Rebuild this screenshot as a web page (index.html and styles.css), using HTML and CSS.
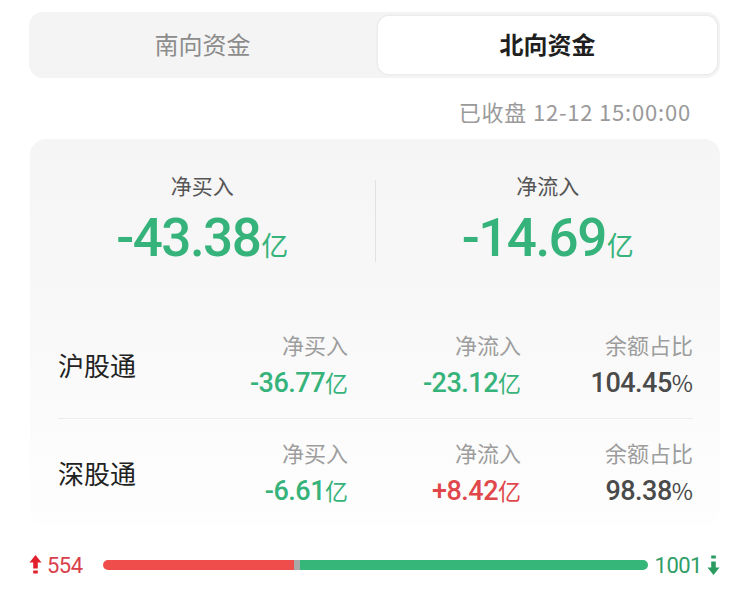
FILE: index.html
```html
<!DOCTYPE html>
<html lang="zh-CN">
<head>
<meta charset="utf-8">
<link rel="stylesheet" href="styles.css">
</head>
<body>
<div class="page">
  <div class="tabs">
    <div class="tab">南向资金</div>
    <div class="tab active">北向资金</div>
  </div>
  <div class="stamp">已收盘 12-12 15:00:00</div>
  <div class="card">
    <div class="summary">
      <div class="sum-col">
        <div class="sum-label">净买入</div>
        <div class="sum-value green"><span class="num">-43.38</span><span class="unit">亿</span></div>
      </div>
      <div class="vdiv"></div>
      <div class="sum-col">
        <div class="sum-label">净流入</div>
        <div class="sum-value green"><span class="num">-14.69</span><span class="unit">亿</span></div>
      </div>
    </div>
    <div class="row">
      <div class="row-name">沪股通</div>
      <div class="cell">
        <div class="cell-label">净买入</div>
        <div class="cell-value green"><span class="num">-36.77</span>亿</div>
      </div>
      <div class="cell">
        <div class="cell-label">净流入</div>
        <div class="cell-value green"><span class="num">-23.12</span>亿</div>
      </div>
      <div class="cell">
        <div class="cell-label">余额占比</div>
        <div class="cell-value dark"><span class="num">104.45</span>%</div>
      </div>
    </div>
    <div class="row">
      <div class="row-name">深股通</div>
      <div class="cell">
        <div class="cell-label">净买入</div>
        <div class="cell-value green"><span class="num">-6.61</span>亿</div>
      </div>
      <div class="cell">
        <div class="cell-label">净流入</div>
        <div class="cell-value red"><span class="num">+8.42</span>亿</div>
      </div>
      <div class="cell">
        <div class="cell-label">余额占比</div>
        <div class="cell-value dark"><span class="num">98.38</span>%</div>
      </div>
    </div>
  </div>
  <div class="ratio">
    <div class="count up">
      <svg class="arrow" width="13" height="22" viewBox="0 0 13 22"><path d="M6.5 1 L12.5 8.5 H8.8 V14.5 H4.2 V8.5 H0.5 Z" fill="#e0202c"/><rect x="4.2" y="16.5" width="4.6" height="3" fill="#e0202c"/></svg>
      <span class="num">554</span>
    </div>
    <div class="bar">
      <div class="bar-red" style="width:35.1%"></div>
      <div class="bar-mid"></div>
      <div class="bar-green"></div>
    </div>
    <div class="count down">
      <span class="num">1001</span>
      <svg class="arrow" width="13" height="22" viewBox="0 0 13 22"><rect x="4.2" y="1.5" width="4.6" height="3" fill="#2a9b5f"/><path d="M6.5 21 L12.5 13.5 H8.8 V7.5 H4.2 V13.5 H0.5 Z" fill="#2a9b5f"/></svg>
    </div>
  </div>
</div>
</body>
</html>
```
FILE: styles.css
```css
* { box-sizing: border-box; }
html, body { margin: 0; padding: 0; background: #fff; }
body {
  font-family: "Noto Sans CJK SC", "Noto Sans", sans-serif;
  width: 750px;
  height: 614px;
  overflow: hidden;
}
.page { padding: 12px 30px 0 29px; }

.tabs {
  display: grid;
  grid-template-columns: 1fr 1fr;
  gap: 6px;
  height: 66px;
  padding: 4px 3px 4px 4px;
  background: #f4f4f4;
  border-radius: 14px;
}
.tab {
  display: flex;
  align-items: center;
  justify-content: center;
  font-size: 24px;
  color: #8c8c8c;
  border-radius: 11px;
  padding-bottom: 3px;
}
.tab.active {
  background: #fff;
  color: #1f1f1f;
  font-weight: 700;
  box-shadow: 0 0 0 1.5px #ececec;
}

.stamp {
  text-align: right;
  font-size: 22px;
  letter-spacing: 0.8px;
  color: #9a9a9a;
  padding: 17px 29px 0 0;
  height: 61px;
  line-height: 32px;
}

.num {
  font-family: Roboto, "Liberation Sans", sans-serif;
  font-weight: 500;
}
.green { color: #36b37a; }
.red { color: #e0474b; }
.dark { color: #4a4a4a; }

.card {
  border-radius: 16px;
  background: linear-gradient(180deg, #f5f5f5 0%, #f8f8f8 45%, #fefefe 100%);
  padding: 31px 28px 0 28px;
  height: 387px;
  margin-left: 1px;
}
.summary {
  display: flex;
  align-items: flex-start;
  height: 140px;
  margin: 0 -28px;
}
.sum-col {
  flex: 1;
  display: flex;
  flex-direction: column;
  align-items: center;
}
.sum-label {
  font-size: 21px;
  color: #555;
  line-height: 30px;
}
.sum-value {
  margin-top: 10px;
  line-height: 56px;
  display: flex;
  align-items: baseline;
}
.sum-value .num {
  font-size: 53px;
  letter-spacing: -1.5px;
}
.sum-value .unit {
  font-size: 27px;
  margin-left: 1px;
}
.vdiv {
  width: 1px;
  height: 82px;
  margin-top: 10px;
  background: #e2e2e2;
}

.row {
  display: grid;
  grid-template-columns: 1fr 160px 173px 172px;
  align-items: center;
  height: 108px;
  margin-right: -1px;
}
.row + .row { border-top: 1px solid #ececec; }
.row-name {
  font-size: 26px;
  color: #222;
}
.cell {
  text-align: right;
}
.cell-label {
  font-size: 22px;
  color: #9d9d9d;
  line-height: 30px;
}
.cell-value {
  font-size: 23px;
  line-height: 34px;
  margin-top: 6px;
}
.cell-value .num {
  font-size: 27px;
  letter-spacing: -0.5px;
}

.ratio {
  display: flex;
  align-items: center;
  margin-top: 27px;
  height: 24px;
}
.count {
  display: flex;
  align-items: center;
  font-size: 22px;
}
.count .num { font-weight: 400; letter-spacing: -0.5px; }
.count.up { color: #d9404a; width: 74px; }
.count.up .arrow { margin-right: 5px; }
.count.down { color: #2f9d66; width: 72px; justify-content: flex-end; }
.count.down .arrow { margin-left: 5px; }
.bar {
  flex: 1;
  display: flex;
  height: 10px;
  border-radius: 5px;
  overflow: hidden;
}
.bar-red { background: #ef4d4b; }
.bar-mid { width: 6px; background: #a9a9a9; }
.bar-green { flex: 1; background: #36b779; }
```
